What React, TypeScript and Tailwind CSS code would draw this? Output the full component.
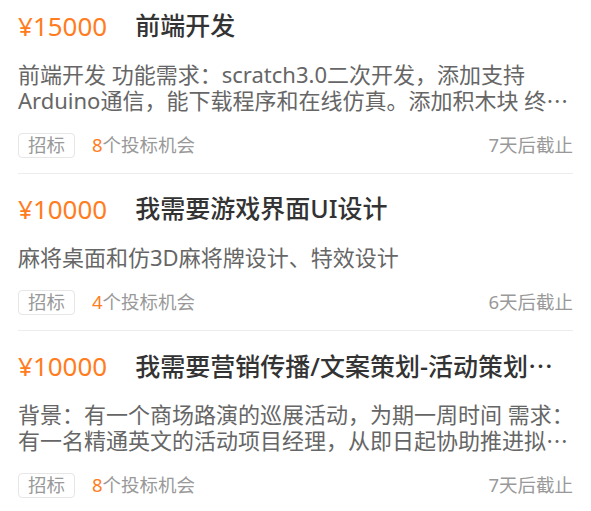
import React from 'react';

interface Task {
  id: number;
  price: number;
  title: string;
  desc: string;
  bids: number;
  daysLeft: number;
}

// text is cut where the list view cuts it, then the ellipsis is added
const TASKS: Task[] = [
  {
    id: 1,
    price: 15000,
    title: '前端开发',
    desc: '前端开发 功能需求：scratch3.0二次开发，添加支持Arduino通信，能下载程序和在线仿真。添加积木块 终',
    bids: 8,
    daysLeft: 7,
  },
  {
    id: 2,
    price: 10000,
    title: '我需要游戏界面UI设计',
    desc: '麻将桌面和仿3D麻将牌设计、特效设计',
    bids: 4,
    daysLeft: 6,
  },
  {
    id: 3,
    price: 10000,
    title: '我需要营销传播/文案策划-活动策划',
    desc: '背景：有一个商场路演的巡展活动，为期一周时间 需求：有一名精通英文的活动项目经理，从即日起协助推进拟',
    bids: 8,
    daysLeft: 7,
  },
];

const font = { fontFamily: '"Noto Sans", "Noto Sans CJK SC", sans-serif' };

const Ellipsis = () => <span className="font-['Noto_Sans_CJK_SC']">…</span>;

const TaskCard = ({ task, first }: { task: Task; first: boolean }) => {
  const cutTitle = task.id === 3;
  const cutDesc = task.id !== 2;
  return (
    <div className={`mx-[18px] border-b border-[#ededed] pb-[15px] ${first ? 'pt-[9px]' : 'pt-[18px]'}`}>
      <div className="flex items-center h-[34px] whitespace-nowrap">
        <span className="text-[26px] text-[#ff7d1e] shrink-0">¥{task.price}</span>
        <span className="ml-[28px] text-[25px] font-medium text-[#333] overflow-hidden">
          {task.title}
          {cutTitle && <Ellipsis />}
        </span>
      </div>
      <p className="mt-[19px] mr-[-4px] text-[22px] leading-[25px] text-[#666]">
        {task.desc}
        {cutDesc && <Ellipsis />}
      </p>
      <div className="mt-[19px] flex items-center h-[26px] text-[18.5px] leading-none text-[#999]">
        <span className="h-[25px] px-[9px] flex items-center border border-[#e6e6e6] rounded-[4px]">招标</span>
        <span className="ml-[17px]">
          <span className="text-[#ff7d1e]">{task.bids}</span>个投标机会
        </span>
        <span className="ml-auto">{task.daysLeft}天后截止</span>
      </div>
    </div>
  );
};

export default function App() {
  return (
    <div className="w-[591px] h-[511px] overflow-hidden bg-white" style={font}>
      {TASKS.map((t, i) => (
        <TaskCard key={t.id} task={t} first={i === 0} />
      ))}
    </div>
  );
}
